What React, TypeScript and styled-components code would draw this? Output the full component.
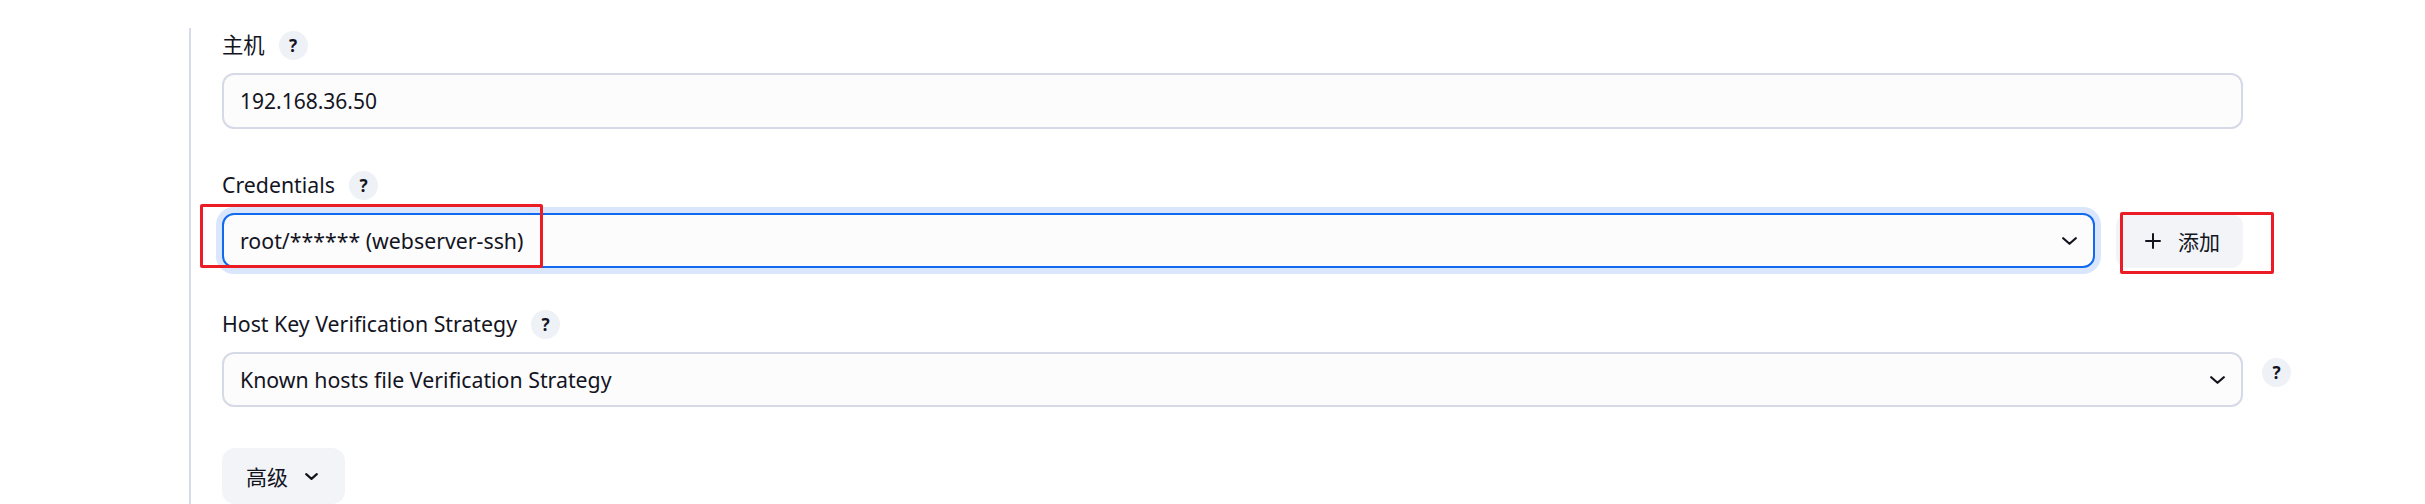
import React from "react";
import styled, { createGlobalStyle, css } from "styled-components";

const GlobalStyle = createGlobalStyle`
  html, body {
    margin: 0;
    padding: 0;
    background: #ffffff;
  }
  body {
    font-family: "Noto Sans", "Noto Sans CJK SC", sans-serif;
    color: #14141f;
  }
`;

const Page = styled.div`
  width: 2425px;
  height: 504px;
  overflow: hidden;
  box-sizing: border-box;
  padding: 28px 113px 0 189px;
  background: #ffffff;
`;

const Section = styled.div`
  box-sizing: border-box;
  height: 476px;
  border-left: 2px solid #d8dce9;
  padding: 2px 0 0 31px;
  display: flex;
  flex-direction: column;
`;

const Field = styled.div`
  display: flex;
  flex-direction: column;
  gap: 13px;
  margin-bottom: 41px;
`;

const LabelRow = styled.div`
  display: flex;
  align-items: center;
  gap: 14px;
  height: 30px;
`;

const LabelText = styled.span`
  font-size: 21.3px;
  line-height: 30px;
  color: #14141f;
`;

const HelpButton = styled.span<{ $side?: boolean }>`
  display: inline-flex;
  align-items: center;
  justify-content: center;
  width: 29px;
  height: 29px;
  border-radius: 50%;
  background: #eef1f5;
  color: #14141f;
  font-size: 17px;
  font-weight: 700;
  line-height: 1;
  ${(p) =>
    p.$side &&
    css`
      margin: 6px 0 0 19px;
      align-self: start;
    `}
`;

const ControlRow = styled.div`
  display: grid;
  grid-template-columns: minmax(0, 1fr) 69px;
  align-items: center;
`;

const TextInput = styled.input`
  box-sizing: border-box;
  width: 100%;
  height: 56px;
  margin: 0;
  padding: 0 16px;
  border: 2px solid #d6dae7;
  border-radius: 12px;
  background: #fcfcfd;
  font-family: "Noto Sans", "Noto Sans CJK SC", sans-serif;
  font-size: 21px;
  color: #14141f;
  outline: none;
`;

const Select = styled.div<{ $focused?: boolean }>`
  box-sizing: border-box;
  height: 55px;
  display: flex;
  align-items: center;
  justify-content: space-between;
  padding: 0 16px;
  border: 2px solid #d6dae7;
  border-radius: 12px;
  background: #fcfcfd;
  font-size: 21.3px;
  color: #14141f;
  ${(p) =>
    p.$focused &&
    css`
      border-color: #1169f0;
      box-shadow: 0 0 0 6px #d9e6fc;
    `}
`;

const SelectWithAdd = styled.div`
  display: flex;
  align-items: center;
  gap: 21px;
`;

const Annotated = styled.div<{ $grow?: boolean }>`
  position: relative;
  ${(p) =>
    p.$grow &&
    css`
      flex: 1;
      min-width: 0;
    `}
`;

const RedFrame = styled.div<{ $l: number; $t: number; $w: number; $h: number }>`
  position: absolute;
  left: ${(p) => p.$l}px;
  top: ${(p) => p.$t}px;
  width: ${(p) => p.$w}px;
  height: ${(p) => p.$h}px;
  box-sizing: border-box;
  border: 3px solid #ec1c24;
  border-radius: 2px;
  pointer-events: none;
`;

const GrayButton = styled.button<{ $w: number; $h: number; $pl: number }>`
  box-sizing: border-box;
  width: ${(p) => p.$w}px;
  height: ${(p) => p.$h}px;
  display: inline-flex;
  align-items: center;
  gap: 17px;
  margin: 0;
  padding: 0 0 0 ${(p) => p.$pl}px;
  border: none;
  border-radius: 12px;
  background: #f2f4f7;
  font-family: "Noto Sans", "Noto Sans CJK SC", sans-serif;
  font-size: 21px;
  color: #14141f;
  cursor: pointer;
`;

const AdvancedButton = styled(GrayButton)`
  align-self: flex-start;
  border-radius: 13px;
`;

const Chevron = ({ w = 15, h = 8 }: { w?: number; h?: number }) => (
  <svg width={w} height={h} viewBox={`0 0 ${w} ${h}`} fill="none">
    <polyline
      points={`1.2,1.2 ${w / 2},${h - 1.2} ${w - 1.2},1.2`}
      stroke="#14141f"
      strokeWidth="2.2"
      strokeLinecap="round"
      strokeLinejoin="round"
    />
  </svg>
);

const Plus = () => (
  <svg width="16" height="16" viewBox="0 0 16 16" fill="none">
    <path d="M8 1v14M1 8h14" stroke="#14141f" strokeWidth="2" strokeLinecap="round" />
  </svg>
);

export default function App() {
  return (
    <>
      <GlobalStyle />
      <Page>
        <Section>
          <Field>
            <LabelRow>
              <LabelText>主机</LabelText>
              <HelpButton>?</HelpButton>
            </LabelRow>
            <ControlRow>
              <TextInput readOnly value="192.168.36.50" />
            </ControlRow>
          </Field>

          <Field>
            <LabelRow>
              <LabelText>Credentials</LabelText>
              <HelpButton>?</HelpButton>
            </LabelRow>
            <ControlRow>
              <SelectWithAdd>
                <Annotated $grow>
                  <Select $focused>
                    <span>root/****** (webserver-ssh)</span>
                    <Chevron />
                  </Select>
                  <RedFrame $l={-22} $t={-9} $w={343} $h={64} />
                </Annotated>
                <Annotated>
                  <GrayButton $w={127} $h={54} $pl={29}>
                    <Plus />
                    <span>添加</span>
                  </GrayButton>
                  <RedFrame $l={4} $t={-2} $w={154} $h={62} />
                </Annotated>
              </SelectWithAdd>
            </ControlRow>
          </Field>

          <Field>
            <LabelRow>
              <LabelText>Host Key Verification Strategy</LabelText>
              <HelpButton>?</HelpButton>
            </LabelRow>
            <ControlRow>
              <Select>
                <span>Known hosts file Verification Strategy</span>
                <Chevron />
              </Select>
              <HelpButton $side>?</HelpButton>
            </ControlRow>
          </Field>

          <AdvancedButton $w={123} $h={56} $pl={24}>
            <span>高级</span>
            <Chevron w={13} h={7} />
          </AdvancedButton>
        </Section>
      </Page>
    </>
  );
}
